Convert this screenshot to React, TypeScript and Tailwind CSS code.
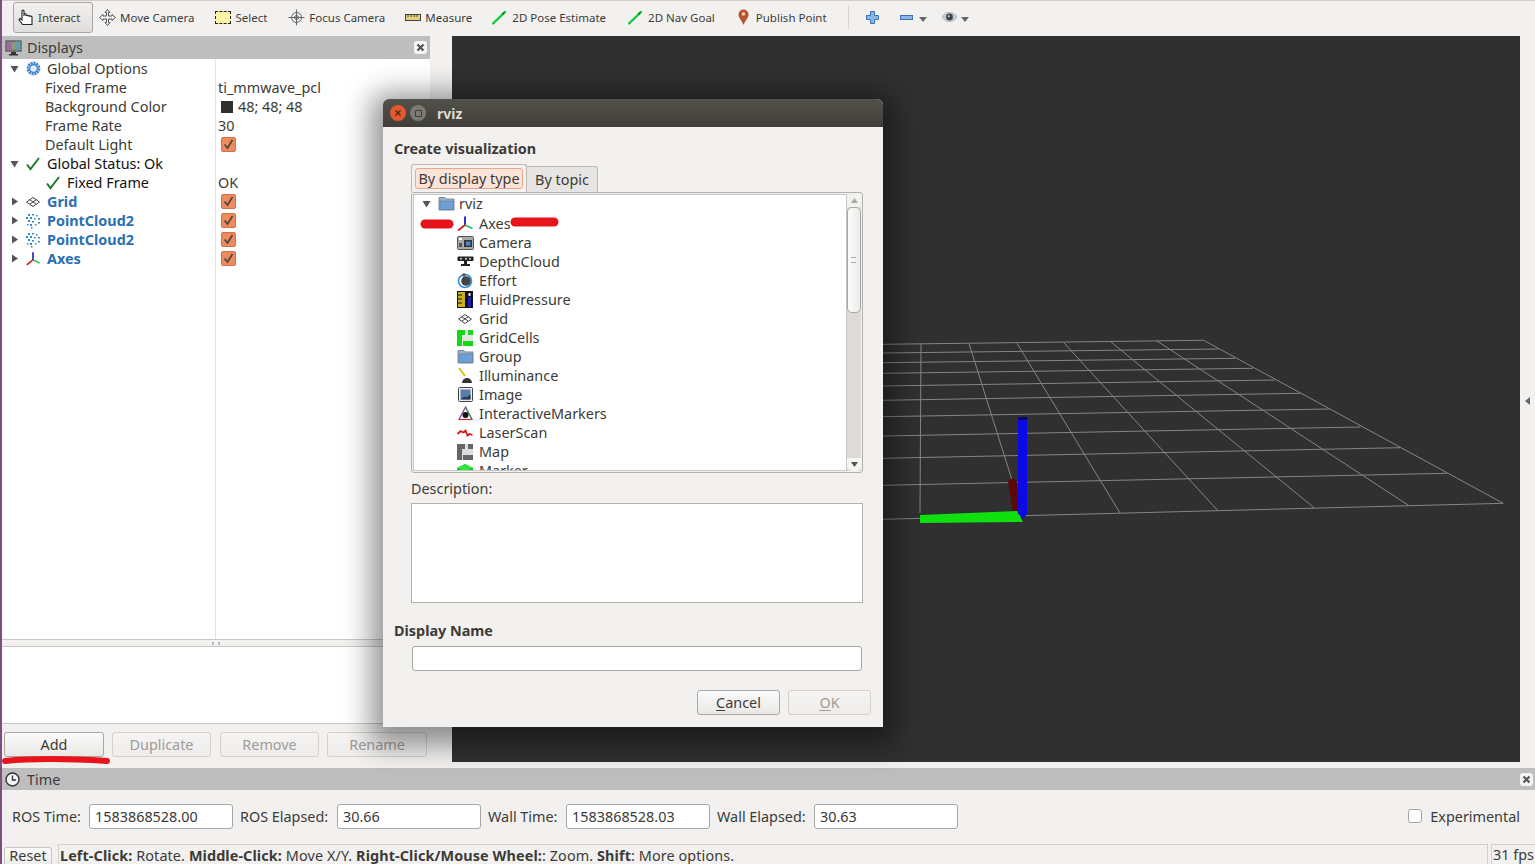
import type { ReactNode } from 'react'

const H_LINES = [
  [883, 344.3, 1203.7, 340.3],
  [883, 353, 1218.3, 349],
  [883, 362.7, 1235, 358.3],
  [883, 373.3, 1253, 368.3],
  [883, 386, 1274.7, 380],
  [883, 400.3, 1299.8, 393.3],
  [883, 416.7, 1329, 409],
  [883, 436, 1360.4, 427],
  [883, 458.3, 1400, 447.7],
  [883, 485.3, 1446.8, 473.3],
  [883, 519.3, 1503.2, 503.3],
]

const V_LINES = [
  [921, 344.3, 920, 513],
  [969, 343.5, 1012, 480],
  [1017, 343.3, 1120.2, 513.3],
  [1063.8, 342.7, 1217.5, 510.3],
  [1111, 342, 1314.4, 508],
  [1157, 341, 1408.4, 505.3],
  [1203.7, 340.3, 1503.2, 503.3],
]

function AxesIcon() {
  return (
    <svg width="18" height="18" viewBox="0 0 18 18" fill="none" strokeWidth="1.800">
      <path d="M9 10V1.500" stroke="#1a1ac8" />
      <path d="M9 10l7.500 3.500" stroke="#22c55e" />
      <path d="M9 10l-7 5.500" stroke="#c81e1e" />
    </svg>
  )
}

function GridIcon() {
  return (
    <svg width="16" height="12" viewBox="0 0 16 12" fill="none" stroke="#444" strokeWidth="1">
      <path d="M8 1.500l6.500 4.500L8 10.500L1.500 6z" />
      <path d="M4.500 3.500l6.500 4.500M11.500 3.500L5 8" />
    </svg>
  )
}

function CloudIcon() {
  return (
    <svg width="16" height="16" viewBox="0 0 16 16" fill="#2f86c9">
      <rect x="3" y="1" width="2" height="2" />
      <rect x="7" y="1" width="2" height="1.500" />
      <rect x="11" y="2" width="1.500" height="1.500" />
      <rect x="1" y="4" width="2" height="2" />
      <rect x="5" y="4" width="2" height="2" />
      <rect x="9" y="5" width="1.500" height="1.500" />
      <rect x="13" y="5" width="2" height="1.500" />
      <rect x="3" y="7" width="2" height="2" />
      <rect x="7" y="8" width="2" height="1.500" />
      <rect x="13" y="9" width="2" height="1.500" />
      <rect x="2" y="11" width="1.500" height="1.500" />
      <rect x="5" y="11" width="2" height="2" />
      <rect x="10" y="11" width="1.500" height="1.500" />
      <rect x="6" y="14" width="1.500" height="1.500" />
    </svg>
  )
}

function GearIcon() {
  return (
    <svg width="15" height="15" viewBox="0 0 15 15">
      <circle cx="7.500" cy="7.500" r="5.500" fill="none" stroke="#3f7fd0" strokeWidth="2.800" strokeDasharray="2 0.800" />
      <circle cx="7.500" cy="7.500" r="3.800" fill="none" stroke="#3f7fd0" strokeWidth="1.400" />
      <circle cx="7.500" cy="7.500" r="2.200" fill="#dbe8f8" />
    </svg>
  )
}

function Check({ size = 16 }: { size?: number }) {
  return (
    <svg width={size} height={size} viewBox="0 0 16 16" fill="none" stroke="#1f7a2e" strokeWidth="2">
      <path d="M2 8.500l3.500 4.500L14 2" />
    </svg>
  )
}

function FolderIcon() {
  return (
    <svg width="17" height="15" viewBox="0 0 17 15">
      <path d="M1 3V1.500h6L8.500 3H16v11H1z" fill="#9fb0c2" stroke="#7f8a96" />
      <rect x="2" y="5" width="13.500" height="8.500" fill="#6f9fd3" stroke="#5581b3" strokeWidth="0.700" />
    </svg>
  )
}

function CameraIcon() {
  return (
    <svg width="17" height="15" viewBox="0 0 17 15">
      <rect x="0.500" y="1.500" width="16" height="13" rx="1" fill="#a9a9a9" stroke="#555" />
      <rect x="2" y="3" width="3" height="2" fill="#fff" />
      <rect x="7" y="5" width="8" height="7" fill="#333" />
      <rect x="9" y="6.500" width="4.500" height="4" fill="#4a88d8" />
      <rect x="2" y="8" width="3" height="4" fill="#555" />
    </svg>
  )
}

function DepthIcon() {
  return (
    <svg width="17" height="11" viewBox="0 0 17 11">
      <rect x="0.500" y="0.500" width="16" height="4.500" rx="1" fill="#222" />
      <circle cx="4" cy="2.700" r="1" fill="#ddd" />
      <circle cx="9" cy="2.700" r="1" fill="#ddd" />
      <circle cx="13" cy="2.700" r="1" fill="#ddd" />
      <path d="M7 5h3v3h3v2H4V8h3z" fill="#222" />
    </svg>
  )
}

function EffortIcon() {
  return (
    <svg width="16" height="16" viewBox="0 0 16 16">
      <circle cx="8" cy="8" r="6.500" fill="none" stroke="#2f8fe0" strokeWidth="1.600" />
      <circle cx="9" cy="8" r="4.800" fill="#444" />
      <circle cx="7" cy="2" r="1.800" fill="#555" />
    </svg>
  )
}

function FluidIcon() {
  return (
    <svg width="16" height="17" viewBox="0 0 16 17">
      <rect width="16" height="17" fill="#111" />
      <rect x="1" y="1" width="7" height="15" fill="#c9b21c" />
      <path d="M1 4h4M1 8h4M1 12h4" stroke="#111" strokeWidth="1.200" />
      <rect x="11" y="6" width="3" height="10" fill="#1d1dbf" />
      <rect x="11.500" y="2" width="2" height="3" fill="#eee" />
    </svg>
  )
}

function GridCellsIcon({ on, off }: { on: string; off: string }) {
  return (
    <svg width="16" height="16" viewBox="0 0 16 16">
      <rect width="16" height="16" fill={off} />
      <path d="M0 0h8v5H5v6H0zM11 0h5v5h-5zM6 11h10v5H6z" fill={on} />
      <path d="M0 11h5v5H0z" fill={on} />
    </svg>
  )
}

function IlluminanceIcon() {
  return (
    <svg width="16" height="16" viewBox="0 0 16 16">
      <path d="M2 0l6 8" stroke="#d9c31f" strokeWidth="2" />
      <path d="M5 15a5 5 0 0 1 10 0z" fill="#333" />
    </svg>
  )
}

function ImageIcon() {
  return (
    <svg width="15" height="15" viewBox="0 0 15 15">
      <rect x="0.500" y="0.500" width="14" height="14" rx="1" fill="#eee" stroke="#444" />
      <rect x="2.500" y="2.500" width="10" height="10" fill="#5b7ea8" />
      <path d="M2.500 12.500l4-3 2 1 4-3v5z" fill="#24364d" />
    </svg>
  )
}

function MarkersIcon() {
  return (
    <svg width="15" height="15" viewBox="0 0 15 15" fill="none">
      <path d="M7.500 1L14 13.500H1z" stroke="#8a3fa8" strokeWidth="1.200" />
      <path d="M7.500 1L14 13.500" stroke="#2f9e44" strokeWidth="1.200" />
      <path d="M1 13.500h13" stroke="#d62828" strokeWidth="1.200" />
      <circle cx="7.500" cy="9" r="3" fill="#111" />
    </svg>
  )
}

function LaserIcon() {
  return (
    <svg width="17" height="10" viewBox="0 0 17 10" fill="none" stroke="#d01818" strokeWidth="1.800">
      <path d="M0.500 6l3-3 3 1.500 2-2 2 5 2-1.500 3 1" />
    </svg>
  )
}

function MarkerIcon() {
  return (
    <svg width="16" height="14" viewBox="0 0 16 14">
      <path d="M8 0l8 4v7l-8 3-8-3V4z" fill="#0fbf24" />
      <path d="M8 0l8 4-8 3-8-3z" fill="#2fe83f" />
    </svg>
  )
}

function PanelClose() {
  return (
    <div className="flex size-[13px] items-center justify-center rounded-[3px] bg-[#f4f4f4] text-[#555]">
      <svg width="9" height="9" viewBox="0 0 9 9" stroke="#555" strokeWidth="2.200">
        <path d="M1.500 1.500l6 6M7.500 1.500l-6 6" />
      </svg>
    </div>
  )
}

function Tri({ open }: { open?: boolean }) {
  return (
    <svg width="9" height="9" viewBox="0 0 9 9" fill="#555">
      {open ? <path d="M0.500 2h8l-4 6.500z" /> : <path d="M2 0.500v8l6-4z" />}
    </svg>
  )
}

function Tick() {
  return (
    <div className="flex size-[15px] items-center justify-center rounded-[2px] border border-[#c8744c] bg-[#f08a5d]">
      <svg width="13" height="13" viewBox="0 0 13 13" fill="none" stroke="#4a4a44" strokeWidth="1.800">
        <path d="M2.500 6.500l3 3.500 5-8" />
      </svg>
    </div>
  )
}

function TreeRow({
  indent,
  arrow,
  icon,
  label,
  labelClass = 'text-[#3c3b37]',
  value,
}: {
  indent: string
  arrow?: ReactNode
  icon?: ReactNode
  label: string
  labelClass?: string
  value?: ReactNode
}) {
  return (
    <div className="flex h-[19px] items-center">
      <div className={`flex h-full w-[213px] shrink-0 items-center ${indent}`}>
        {arrow && <span className="mr-[6px] flex w-[9px] shrink-0 items-center">{arrow}</span>}
        {icon && <span className="mr-[6px] flex w-[16px] shrink-0 items-center justify-center">{icon}</span>}
        <span className={`whitespace-nowrap ${labelClass}`}>{label}</span>
      </div>
      <div className="flex h-full items-center pl-[3px] text-[#3c3b37]">{value}</div>
    </div>
  )
}

function ToolItem({ icon, label, className = '' }: { icon: ReactNode; label: string; className?: string }) {
  return (
    <div className={`flex items-center gap-[4px] whitespace-nowrap ${className}`}>
      {icon}
      <span>{label}</span>
    </div>
  )
}

function SmallButton({ label, disabled, className = '' }: { label: string; disabled?: boolean; className?: string }) {
  return (
    <div
      className={`flex h-[25px] items-center justify-center rounded-[3px] border bg-gradient-to-b ${
        disabled
          ? 'border-[#d3d1cd] from-[#f5f4f3] to-[#eeedec] text-[#9d9c98]'
          : 'border-[#aaa8a3] from-[#fbfbfb] to-[#e9e8e6] text-[#3c3b37]'
      } ${className}`}
    >
      {label}
    </div>
  )
}

function TimeField({ label, value, labelClass }: { label: string; value: string; labelClass: string }) {
  return (
    <>
      <span className={`whitespace-nowrap ${labelClass}`}>{label}</span>
      <div className="mr-[7px] flex h-[25px] w-[144px] items-center rounded-[3px] border border-[#aaa8a3] bg-white pl-[5px]">
        {value}
      </div>
    </>
  )
}

const DISPLAY_TYPES: { name: string; icon: ReactNode }[] = [
  { name: 'Axes', icon: <AxesIcon /> },
  { name: 'Camera', icon: <CameraIcon /> },
  { name: 'DepthCloud', icon: <DepthIcon /> },
  { name: 'Effort', icon: <EffortIcon /> },
  { name: 'FluidPressure', icon: <FluidIcon /> },
  { name: 'Grid', icon: <GridIcon /> },
  { name: 'GridCells', icon: <GridCellsIcon on="#12d912" off="#e4e4e4" /> },
  { name: 'Group', icon: <FolderIcon /> },
  { name: 'Illuminance', icon: <IlluminanceIcon /> },
  { name: 'Image', icon: <ImageIcon /> },
  { name: 'InteractiveMarkers', icon: <MarkersIcon /> },
  { name: 'LaserScan', icon: <LaserIcon /> },
  { name: 'Map', icon: <GridCellsIcon on="#666" off="#ddd" /> },
  { name: 'Marker', icon: <MarkerIcon /> },
]

function Dialog() {
  return (
    <div className="absolute left-[381px] top-[99px] flex h-[628px] w-[500px] flex-col rounded-t-[6px] bg-[#f2f1f0] text-[#3c3b37] shadow-[0_6px_28px_12px_rgba(0,0,0,0.42)]">
      <div className="flex h-[28px] shrink-0 items-center rounded-t-[6px] bg-gradient-to-b from-[#53514b] to-[#3f3e39] pl-[7px]">
        <div className="flex size-[16px] items-center justify-center rounded-full bg-[#e2572c]">
          <svg width="8" height="8" viewBox="0 0 8 8" stroke="#4a2a1c" strokeWidth="1.300">
            <path d="M1.500 1.500l5 5M6.500 1.500l-5 5" />
          </svg>
        </div>
        <div className="ml-[4px] flex size-[16px] items-center justify-center rounded-full bg-[#7b7a74]">
          <div className="size-[7px] rounded-[1px] border border-[#3f3e39]" />
        </div>
        <span className="ml-[11px] text-[14px] font-bold text-[#dfdbd2]">rviz</span>
      </div>
      <div className="flex flex-1 flex-col px-[11px]">
        <div className="mt-[12px] h-[20px] font-bold leading-[20px]">Create visualization</div>
        <div className="ml-[17px] mt-[5px] flex h-[28px] items-end">
          <div className="relative z-10 flex h-[28px] w-[116px] items-center justify-center rounded-t-[3px] border border-b-0 border-[#bcbab5] bg-[#f2f1f0]">
            <div className="flex h-[21px] w-[108px] items-center justify-center whitespace-nowrap rounded-[3px] border border-[#eba78b] bg-[#fbe3d8]">
              By display type
            </div>
          </div>
          <div className="flex h-[26px] w-[71px] items-center justify-center rounded-tr-[3px] border border-b-0 border-l-0 border-[#bcbab5] bg-[#e6e5e3]">
            By topic
          </div>
        </div>
        <div className="ml-[17px] flex h-[281px] w-[452px] rounded-[3px] border border-[#b3b1ac] bg-[#f2f1f0] p-px">
          <div className="h-full w-[435px] overflow-hidden border border-[#c9c7c3] bg-white pl-[8px]">
            <div className="flex h-[19px] items-center pb-[2px]">
              <span className="mr-[5px] flex w-[9px] items-center">
                <Tri open />
              </span>
              <span className="mr-[3px] flex w-[20px] justify-center">
                <FolderIcon />
              </span>
              <span>rviz</span>
            </div>
            {DISPLAY_TYPES.map(({ name, icon }) => (
              <div key={name} className="flex h-[19px] items-center pl-[32px]">
                <span className="mr-[3px] flex w-[22px] shrink-0 justify-center">{icon}</span>
                <span>{name}</span>
              </div>
            ))}
          </div>
          <div className="relative flex w-[14px] flex-col bg-[#dcdbd9]">
            <div className="flex h-[13px] items-center justify-center bg-[#f2f1f0]">
              <svg width="7" height="5" viewBox="0 0 7 5" fill="#aaa">
                <path d="M3.500 0l3.500 5H0z" />
              </svg>
            </div>
            <div className="relative h-[106px] rounded-[5px] border border-[#a9a7a3] bg-gradient-to-r from-[#fbfbfb] to-[#ececeb]">
              <div className="absolute left-[3px] top-[49px] h-[6px] w-[5px] border-y border-[#aaa]" />
            </div>
            <div className="flex-1" />
            <div className="flex h-[13px] items-center justify-center rounded-b-[5px] bg-[#f6f5f4]">
              <svg width="7" height="5" viewBox="0 0 7 5" fill="#555">
                <path d="M0 0h7L3.500 5z" />
              </svg>
            </div>
          </div>
        </div>
        <div className="ml-[17px] mt-[6px] h-[20px] leading-[20px]">Description:</div>
        <div className="ml-[17px] mt-[4px] h-[100px] w-[452px] border border-[#b3b1ac] bg-white" />
        <div className="mt-[18px] h-[20px] font-bold leading-[20px]">Display Name</div>
        <div className="ml-[18px] mt-[5px] h-[25px] w-[450px] rounded-[3px] border border-[#aaa8a3] bg-white" />
        <div className="mt-[19px] flex justify-end gap-[8px] self-end pr-[1px]">
          <div className="flex h-[25px] w-[83px] items-center justify-center rounded-[3px] border border-[#aaa8a3] bg-gradient-to-b from-[#fbfbfb] to-[#e9e8e6]">
            <span className="underline decoration-1 underline-offset-2 [text-decoration-skip-ink:none]">C</span>ancel
          </div>
          <div className="flex h-[25px] w-[83px] items-center justify-center rounded-[3px] border border-[#d3d1cd] bg-gradient-to-b from-[#f5f4f3] to-[#eeedec] text-[#9d9c98]">
            <span className="underline decoration-1 underline-offset-2 [text-decoration-skip-ink:none]">O</span>K
          </div>
        </div>
      </div>
    </div>
  )
}

const ARROW_ICON = (
  <svg width="15" height="15" viewBox="0 0 15 15" fill="none" strokeLinecap="round">
    <path d="M1 13.500L13 2" stroke="#10c93a" strokeWidth="2.400" />
    <path d="M13.500 1.500l-4 1.500 2 2z" fill="#0a8f28" />
  </svg>
)

export default function App() {
  return (
    <div className="relative flex h-[864px] w-[1535px] flex-col overflow-hidden border-l-2 border-[#7d4f80] bg-[#f2f1f0] font-['Noto_Sans',sans-serif] text-[14.400px] leading-[19px] text-[#3c3b37]">
      {/* toolbar */}
      <div className="flex h-[36px] shrink-0 items-center border-t border-[#d0cfcd] pb-[3px] pl-[11px] text-[11.500px]">
        <div className="flex h-[31px] w-[80px] items-center justify-start gap-[3px] rounded-[3px] border border-[#a8a6a1] bg-gradient-to-b from-[#f2f1f0] to-[#dfdedc] pl-[3px]">
          <svg width="18" height="18" viewBox="0 0 18 18" fill="#fff" stroke="#222" strokeWidth="1.100">
            <path d="M5.500 16.500L2 11.500l1-1 2 1.500V3a1 1 0 0 1 2 0v5V6.500a1 1 0 0 1 2 0V8a1 1 0 0 1 2 0v.500a1 1 0 0 1 2 0v.500a1 1 0 0 1 2 0v7.500z" />
          </svg>
          <span>Interact</span>
        </div>
        <ToolItem
          className="ml-[6px] gap-[3px]"
          label="Move Camera"
          icon={
            <svg width="17" height="17" viewBox="0 0 17 17" fill="#f4f4f4" stroke="#555" strokeWidth="1">
              <path d="M8.500 0.500l2.500 3H9.500v3.500H13V5.500l3.500 3-3.500 3V10H9.500v3.500H11l-2.500 3-2.500-3h1.500V10H4v1.500l-3.500-3 3.500-3V7h3.500V3.500H6z" />
            </svg>
          }
        />
        <ToolItem
          className="ml-[21px]"
          label="Select"
          icon={<div className="h-[13px] w-[16px] border border-dashed border-[#222] bg-[#fdf6a8]" />}
        />
        <ToolItem
          className="ml-[21px] gap-[3px]"
          label="Focus Camera"
          icon={
            <svg width="17" height="17" viewBox="0 0 17 17" fill="none" stroke="#666" strokeWidth="1">
              <circle cx="8.500" cy="8.500" r="5" fill="#eee" />
              <path d="M8.500 0.500v16M0.500 8.500h16" />
              <circle cx="8.500" cy="8.500" r="2" />
            </svg>
          }
        />
        <ToolItem
          className="ml-[20px]"
          label="Measure"
          icon={
            <svg width="16" height="7" viewBox="0 0 16 7">
              <rect x="0.500" y="0.500" width="15" height="6" fill="#e3d27a" stroke="#444" />
              <path d="M3 1v2M6 1v2M9 1v2M12 1v2" stroke="#444" />
            </svg>
          }
        />
        <ToolItem className="ml-[20px] gap-[5px]" label="2D Pose Estimate" icon={ARROW_ICON} />
        <ToolItem className="ml-[22px] gap-[5px]" label="2D Nav Goal" icon={ARROW_ICON} />
        <ToolItem
          className="ml-[23px] gap-[7px]"
          label="Publish Point"
          icon={
            <svg width="11" height="16" viewBox="0 0 11 16">
              <path d="M5.500 16C4 12 0.500 9 0.500 5.500a5 5 0 0 1 10 0C10.500 9 7 12 5.500 16z" fill="#b8532c" />
              <circle cx="5.500" cy="5" r="1.800" fill="#f3d3c4" />
            </svg>
          }
        />
        <div className="ml-[21px] h-[24px] w-px bg-[#d6d5d2]" />
        <svg className="ml-[17px]" width="13" height="13" viewBox="0 0 13 13" fill="#8db6e6" stroke="#3a72b8" strokeWidth="1">
          <path d="M4.500 0.500h4v4h4v4h-4v4h-4v-4h-4v-4h4z" />
        </svg>
        <svg className="ml-[21px]" width="13" height="5" viewBox="0 0 13 5" fill="#8db6e6" stroke="#3a72b8" strokeWidth="1">
          <rect x="0.500" y="0.500" width="12" height="4" />
        </svg>
        <svg className="ml-[6px] mt-[4px]" width="8" height="5" viewBox="0 0 8 5" fill="#666">
          <path d="M0 0h8L4 5z" />
        </svg>
        <svg className="ml-[15px]" width="15" height="10" viewBox="0 0 15 10">
          <path d="M0 5c3-6 12-6 15 0-3 6-12 6-15 0z" fill="#c3ccd8" stroke="#9aa5b3" strokeWidth="0.600" />
          <circle cx="7.500" cy="5" r="3.400" fill="#444" />
          <circle cx="6.800" cy="4.300" r="1" fill="#cfd8e3" />
        </svg>
        <svg className="ml-[4px] mt-[4px]" width="8" height="5" viewBox="0 0 8 5" fill="#666">
          <path d="M0 0h8L4 5z" />
        </svg>
      </div>

      {/* main */}
      <div className="flex h-[726px] shrink-0">
        <div className="flex w-[428px] shrink-0 flex-col">
          <div className="flex h-[23px] shrink-0 items-center bg-[#bebebe] pl-[3px] pr-[3px]">
            <svg width="17" height="16" viewBox="0 0 17 16">
              <rect x="0.500" y="0.500" width="16" height="11" fill="#333" />
              <rect x="1.500" y="1.500" width="14" height="9" fill="#8a9a7a" />
              <rect x="1.500" y="1.500" width="5" height="9" fill="#9a6a9a" />
              <rect x="10" y="1.500" width="5.500" height="9" fill="#6a9ab0" />
              <path d="M6 12h5v2h2v1.500H4V14h2z" fill="#333" />
            </svg>
            <span className="ml-[5px]">Displays</span>
            <span className="ml-auto">
              <PanelClose />
            </span>
          </div>
          <div className="h-[581px] shrink-0 border-b border-[#c9c7c3] bg-[#fff] [background-image:linear-gradient(#e3e2e0,#e3e2e0)] [background-position:213px_0] [background-repeat:no-repeat] [background-size:1px_100%]">
            <TreeRow indent="pl-[8px]" arrow={<Tri open />} icon={<GearIcon />} label="Global Options" />
            <TreeRow indent="pl-[43px]" label="Fixed Frame" value="ti_mmwave_pcl" />
            <TreeRow
              indent="pl-[43px]"
              label="Background Color"
              value={
                <span className="flex items-center">
                  <span className="ml-[3px] mr-[5px] size-[12px] bg-[#303030]" />
                  48; 48; 48
                </span>
              }
            />
            <TreeRow indent="pl-[43px]" label="Frame Rate" value="30" />
            <TreeRow indent="pl-[43px]" label="Default Light" value={<span className="ml-[3px]"><Tick /></span>} />
            <TreeRow indent="pl-[8px]" arrow={<Tri open />} icon={<Check />} label="Global Status: Ok" labelClass="text-[#111]" />
            <TreeRow indent="pl-[43px]" icon={<Check />} label="Fixed Frame" labelClass="text-[#111]" value="OK" />
            {[
              { label: 'Grid', icon: <GridIcon /> },
              { label: 'PointCloud2', icon: <CloudIcon /> },
              { label: 'PointCloud2', icon: <CloudIcon /> },
              { label: 'Axes', icon: <AxesIcon /> },
            ].map(({ label, icon }, i) => (
              <TreeRow
                key={i}
                indent="pl-[8px]"
                arrow={<Tri />}
                icon={icon}
                label={label}
                labelClass="font-bold text-[#2a6fb5]"
                value={<span className="ml-[3px]"><Tick /></span>}
              />
            ))}
          </div>
          <div className="flex h-[6px] shrink-0 items-center justify-center">
            <div className="h-[3px] w-[8px] border-x-2 border-[#bbb]" />
          </div>
          <div className="h-[78px] shrink-0 border-y border-[#c9c7c3] bg-white" />
          <div className="flex flex-1 items-start pl-[2px] pt-[8px]">
            <SmallButton label="Add" className="w-[100px]" />
            <SmallButton label="Duplicate" disabled className="ml-[8px] w-[99px]" />
            <SmallButton label="Remove" disabled className="ml-[9px] w-[99px]" />
            <SmallButton label="Rename" disabled className="ml-[8px] w-[100px]" />
          </div>
        </div>
        <div className="w-[22px] shrink-0" />
        <div className="h-[726px] w-[1068px] shrink-0 bg-[#303030]" />
        <div className="flex flex-1 items-center justify-center pt-[3px]">
          <svg width="5" height="8" viewBox="0 0 5 8" fill="#666">
            <path d="M5 0v8L0 4z" />
          </svg>
        </div>
      </div>

      {/* time panel */}
      <div className="mt-[6px] flex h-[22px] shrink-0 items-center bg-[#bebebe] pl-[3px] pr-[2px]">
        <svg width="15" height="15" viewBox="0 0 15 15" fill="#f4f4f4" stroke="#333" strokeWidth="1.400">
          <circle cx="7.500" cy="7.500" r="6.500" />
          <path d="M7.500 3.500v4.500h3.500" fill="none" />
        </svg>
        <span className="ml-[7px]">Time</span>
        <span className="ml-auto">
          <PanelClose />
        </span>
      </div>
      <div className="flex h-[52px] shrink-0 items-center pl-[10px] pr-[15px]">
        <TimeField label="ROS Time:" value="1583868528.00" labelClass="w-[77px]" />
        <TimeField label="ROS Elapsed:" value="30.66" labelClass="w-[97px]" />
        <TimeField label="Wall Time:" value="1583868528.03" labelClass="w-[78px]" />
        <TimeField label="Wall Elapsed:" value="30.63" labelClass="w-[97px]" />
        <div className="ml-auto flex items-center gap-[8px]">
          <div className="size-[14px] rounded-[3px] border border-[#a8a6a1] bg-white" />
          <span>Experimental</span>
        </div>
      </div>

      {/* status bar */}
      <div className="mt-[2px] flex min-h-0 flex-1 items-stretch leading-[16px]">
        <div className="ml-[2px] mt-[3px] flex w-[48px] shrink-0 items-start justify-center rounded-t-[3px] border border-b-0 border-[#c9c7c3] bg-gradient-to-b from-[#fbfbfb] to-[#eeedec]">
          Reset
        </div>
        <div className="ml-[6px] w-[1430px] shrink-0 overflow-hidden whitespace-nowrap border border-b-0 border-[#d3d1cd] pl-px pt-[3px] tracking-[0.100px]">
          <b>Left-Click:</b> Rotate. <b>Middle-Click:</b> Move X/Y. <b>Right-Click/Mouse Wheel:</b>: Zoom. <b>Shift</b>: More options.
        </div>
        <div className="ml-[3px] flex-1 whitespace-nowrap border-l border-t border-[#d3d1cd] pl-px pt-[2px]">31 fps</div>
      </div>

      {/* 3d scene */}
      <svg className="pointer-events-none absolute left-[-2px] top-0" width="1535" height="864" viewBox="0 0 1535 864" fill="none">
        {H_LINES.map(([x1, y1, x2, y2], i) => (
          <line key={i} x1={x1} y1={y1} x2={x2} y2={y2} stroke="#858585" />
        ))}
        {V_LINES.map(([x1, y1, x2, y2], i) => (
          <line key={i} x1={x1} y1={y1} x2={x2} y2={y2} stroke="#858585" />
        ))}
        <path d="M1008 482c3-5 8-4 9 0l2 36h-5z" fill="#5a0a0a" />
        <path d="M920 515l97-4 6 11-103 1z" fill="#10e010" />
        <path d="M1018 418h9v96l-4 5-5-6z" fill="#0a0ae6" />
        <rect x="1018" y="417" width="9" height="3" fill="#050570" />
      </svg>

      <Dialog />

      {/* red marks drawn on the screenshot */}
      <svg className="pointer-events-none absolute left-[-2px] top-0" width="1535" height="864" viewBox="0 0 1535 864" fill="none" stroke="#e8141c" strokeLinecap="round">
        <path d="M425 224h24" strokeWidth="9" />
        <path d="M515 222h39" strokeWidth="9" />
        <path d="M5 761c30-3 70-2 102 0" strokeWidth="6" />
      </svg>
    </div>
  )
}
